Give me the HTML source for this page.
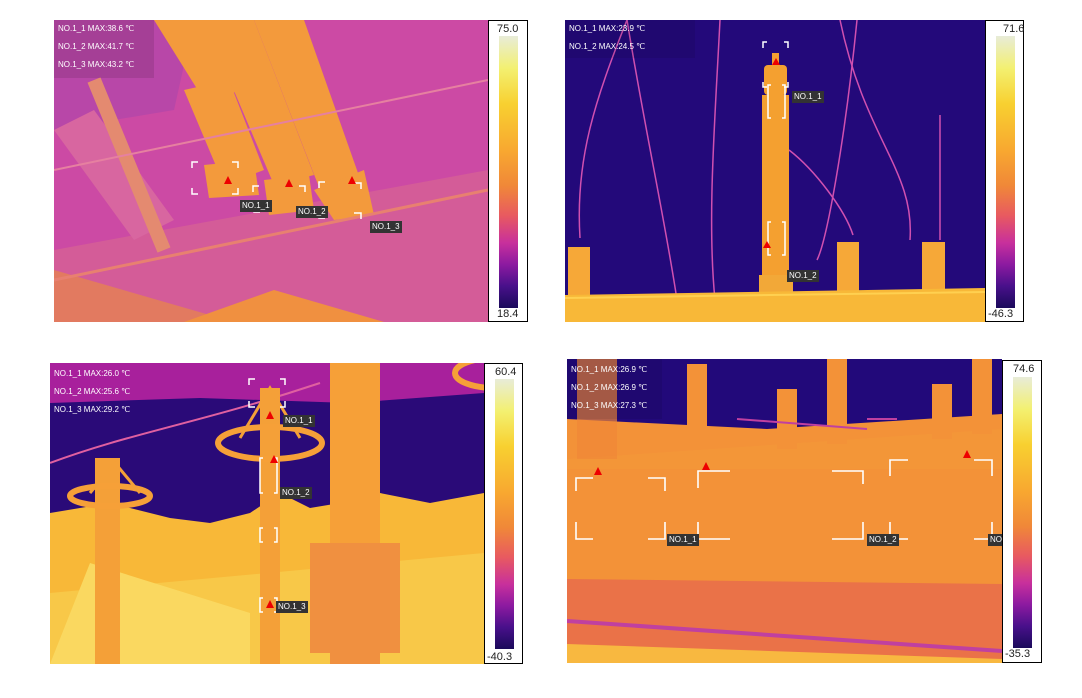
<!DOCTYPE html>
<html><head><meta charset="utf-8"><style>
body{margin:0;width:1082px;height:698px;background:#fff;position:relative;overflow:hidden;font-family:"Liberation Sans",sans-serif}
.p{position:absolute;overflow:hidden}
.cb{position:absolute;background:#fff;border:1px solid #000;box-sizing:border-box}
.g{position:absolute;background:linear-gradient(#e8ecd8 0%,#f3f070 12%,#f8d030 25%,#f8a830 42%,#f08838 55%,#e85a60 66%,#c8309c 76%,#8c1aa0 84%,#48108a 92%,#1a0a5a 100%)}
.v{position:absolute;font-size:11px;color:#222;left:8px}
.t{position:absolute;left:4px;color:#fff;font-size:8px;line-height:18px}
.l{position:absolute;background:#333;color:#fff;font-size:8px;padding:1px 2px;line-height:10px}
svg{position:absolute;left:0;top:0}
</style></head><body>

<!-- Panel 1 -->
<div class="p" style="left:54px;top:20px;width:434px;height:302px">
<svg width="434" height="302">
<rect width="434" height="302" fill="#cc4aa4"/>
<polygon points="0,230 434,150 434,302 0,302" fill="#d45c98"/>
<polygon points="0,250 180,302 0,302" fill="#e27a60"/>
<polygon points="130,302 220,270 330,302" fill="#f09040"/>
<polygon points="0,0 140,0 120,90 0,110" fill="#b847a8"/>
<polygon points="0,110 40,90 120,200 80,220" fill="#d866a0"/>
<polygon points="100,0 200,0 190,70 150,80" fill="#f39a3c"/>
<polygon points="130,70 175,60 210,150 170,165" fill="#f39a3c"/>
<polygon points="150,0 200,0 260,155 220,165" fill="#f39a3c"/>
<polygon points="200,0 250,0 310,170 270,180" fill="#f39a3c"/>
<polygon points="260,170 310,150 320,195 280,200" fill="#f39a3c"/>
<polygon points="150,145 200,140 205,175 155,178" fill="#f39a3c"/>
<polygon points="210,160 255,155 260,190 215,195" fill="#f39a3c"/>
<line x1="40" y1="60" x2="110" y2="230" stroke="#e48a70" stroke-width="14"/>
<line x1="0" y1="150" x2="434" y2="60" stroke="#e680a0" stroke-width="2"/>
<line x1="0" y1="260" x2="434" y2="170" stroke="#e88070" stroke-width="3"/>
<rect width="100" height="58" fill="#000" opacity=".1"/>
<g fill="none" stroke="#fff" stroke-width="1.5">
<path d="M138,148v-6h6M178,142h6v6M138,168v6h6M178,174h6v-6"/>
<path d="M199,172v-6h6M200,186v6h6M245,166h6v6M245,192h6v-6"/>
<path d="M265,168v-6h6M265,192v6h6M300,163h7v6M300,193h7v6"/>
</g>
<polygon points="170,164 174,156 178,164" fill="#e00"/>
<polygon points="231,167 235,159 239,167" fill="#e00"/>
<polygon points="294,164 298,156 302,164" fill="#e00"/>
</svg>
<div class="t" style="top:0">NO.1_1 MAX:38.6 ℃<br>NO.1_2 MAX:41.7 ℃<br>NO.1_3 MAX:43.2 ℃</div>
<div class="l" style="left:186px;top:180px">NO.1_1</div>
<div class="l" style="left:242px;top:186px">NO.1_2</div>
<div class="l" style="left:316px;top:201px">NO.1_3</div>
</div>
<div class="cb" style="left:488px;top:20px;width:40px;height:302px"><div class="v" style="top:2px">75.0</div><div class="g" style="left:10px;top:15px;width:19px;height:272px"></div><div class="v" style="top:287px">18.4</div></div>

<!-- Panel 2 -->
<div class="p" style="left:565px;top:20px;width:420px;height:302px">
<svg width="420" height="302">
<rect width="420" height="302" fill="#23097a"/>
<g fill="none" stroke="#d050b0" stroke-width="1.5">
<path d="M15,218C10,140 30,80 62,0"/><path d="M62,0C80,110 100,200 112,280"/>
<path d="M292,0C280,120 262,220 252,240"/><path d="M275,0C300,120 350,150 345,220"/>
<path d="M224,130C250,150 280,190 288,215"/>
<path d="M155,0C150,100 142,200 150,280"/>
<path d="M375,95V220"/>
</g>
<rect x="197" y="75" width="27" height="183" fill="#f4a030"/>
<rect x="199" y="45" width="23" height="30" rx="4" fill="#f4a030"/>
<rect x="207" y="33" width="7" height="13" fill="#f4a030"/>
<rect x="194" y="255" width="34" height="22" fill="#f2a838"/>
<rect x="3" y="227" width="22" height="60" fill="#f6a838"/>
<rect x="272" y="222" width="22" height="60" fill="#f6a838"/>
<rect x="357" y="222" width="23" height="60" fill="#f6a838"/>
<polygon points="0,275 420,268 420,302 0,302" fill="#f8b838"/>
<line x1="0" y1="278" x2="420" y2="272" stroke="#ffd050" stroke-width="2"/>
<rect width="130" height="38" fill="#000" opacity=".08"/>
<g fill="none" stroke="#fff" stroke-width="1.5">
<path d="M198,28v-6h4M219,22h4v6M198,62v5h4M219,67h4v-5"/>
<path d="M206,65h-3v33h3M217,65h3v33h-3"/>
<path d="M206,202h-3v33h3M217,202h3v33h-3"/>
</g>
<polygon points="207,45 211,38 215,45" fill="#e00"/>
<polygon points="198,228 202,221 206,228" fill="#e00"/>
</svg>
<div class="t" style="top:0">NO.1_1 MAX:23.9 ℃<br>NO.1_2 MAX:24.5 ℃</div>
<div class="l" style="left:227px;top:71px">NO.1_1</div>
<div class="l" style="left:222px;top:250px">NO.1_2</div>
</div>
<div class="cb" style="left:985px;top:20px;width:39px;height:302px"><div class="v" style="top:2px;left:17px">71.6</div><div class="g" style="left:10px;top:15px;width:19px;height:272px"></div><div class="v" style="top:287px;left:2px">-46.3</div></div>

<!-- Panel 3 -->
<div class="p" style="left:50px;top:363px;width:434px;height:301px">
<svg width="434" height="301">
<rect width="434" height="301" fill="#2a0a78"/>
<polygon points="0,0 434,0 434,30 300,40 150,35 0,40" fill="#a8209c"/>
<polygon points="0,150 60,140 120,155 160,160 200,150 230,130 260,145 290,140 330,130 380,140 434,130 434,301 0,301" fill="#f8b838"/>
<polygon points="0,230 434,190 434,301 0,301" fill="#f8c848"/>
<polygon points="40,200 200,250 200,301 0,301" fill="#fad860"/>
<path d="M0,100C80,70 150,60 270,20" stroke="#e060a0" stroke-width="2" fill="none"/>
<rect x="280" y="0" width="50" height="190" fill="#f6a038"/>
<rect x="260" y="180" width="90" height="110" fill="#f09040"/>
<rect x="280" y="290" width="50" height="11" fill="#f09040"/>
<rect x="210" y="25" width="20" height="276" fill="#f4a038"/>
<ellipse cx="220" cy="80" rx="52" ry="16" fill="none" stroke="#f6a038" stroke-width="6"/>
<rect x="45" y="95" width="25" height="206" fill="#f4a038"/>
<ellipse cx="60" cy="133" rx="40" ry="10" fill="none" stroke="#f6a038" stroke-width="6"/>
<path d="M40,130L65,100L90,130M190,75L220,25L250,75" stroke="#f4a038" stroke-width="3" fill="none"/>
<ellipse cx="445" cy="10" rx="40" ry="15" fill="none" stroke="#f6a038" stroke-width="6"/>
<g fill="none" stroke="#fff" stroke-width="1.5">
<path d="M199,22v-6h6M230,16h5v6M199,38v6h6M230,44h5v-6"/>
<path d="M213,95h-3v35h3M224,95h3v35h-3"/>
<path d="M213,165h-3v14h3M224,165h3v14h-3"/>
<path d="M213,235h-3v14h3M224,235h3v14h-3"/>
</g>
<polygon points="216,56 220,48 224,56" fill="#e00"/>
<polygon points="220,100 224,92 228,100" fill="#e00"/>
<polygon points="216,245 220,237 224,245" fill="#e00"/>
</svg>
<div class="t" style="top:2px">NO.1_1 MAX:26.0 ℃<br>NO.1_2 MAX:25.6 ℃<br>NO.1_3 MAX:29.2 ℃</div>
<div class="l" style="left:233px;top:52px">NO.1_1</div>
<div class="l" style="left:230px;top:124px">NO.1_2</div>
<div class="l" style="left:226px;top:238px">NO.1_3</div>
</div>
<div class="cb" style="left:484px;top:363px;width:39px;height:301px"><div class="v" style="top:2px;left:10px">60.4</div><div class="g" style="left:10px;top:15px;width:19px;height:270px"></div><div class="v" style="top:287px;left:2px">-40.3</div></div>

<!-- Panel 4 -->
<div class="p" style="left:567px;top:359px;width:435px;height:304px">
<svg width="435" height="304">
<rect width="435" height="304" fill="#22097a"/>
<polygon points="0,60 200,70 435,55 435,304 0,304" fill="#f39238"/>
<polygon points="0,100 435,70 435,110 0,110" fill="#f49a38" opacity=".6"/>
<polygon points="0,220 435,225 435,304 0,304" fill="#ea7248"/>
<line x1="0" y1="262" x2="435" y2="292" stroke="#c040a0" stroke-width="4"/>
<polygon points="0,285 435,300 435,304 0,304" fill="#f8b840"/>
<rect x="120" y="5" width="20" height="85" fill="#f39238"/>
<rect x="210" y="30" width="20" height="60" fill="#f39238"/>
<rect x="260" y="0" width="20" height="85" fill="#f39238"/>
<rect x="365" y="25" width="20" height="55" fill="#f39238"/>
<rect x="405" y="0" width="20" height="75" fill="#f39238"/>
<rect x="10" y="0" width="40" height="100" fill="#f08838" opacity=".7"/>
<path d="M170,60L300,70M300,60h30" stroke="#c040a0" stroke-width="2"/>
<rect width="95" height="60" fill="#000" opacity=".08"/>
<g fill="none" stroke="#fff" stroke-width="1.6">
<path d="M9,132v-13h17M81,119h17v13M9,163v17h17M81,180h17v-17"/>
<path d="M131,129v-17h32M131,163v17h32"/>
<path d="M265,112h31v13M265,180h31v-17"/>
<path d="M323,117v-16h18M323,163v17h18"/>
<path d="M407,101h18v16M407,180h18v-17"/>
</g>
<polygon points="27,116 31,108 35,116" fill="#e00"/>
<polygon points="135,111 139,103 143,111" fill="#e00"/>
<polygon points="396,99 400,91 404,99" fill="#e00"/>
</svg>
<div class="t" style="top:2px">NO.1_1 MAX:26.9 ℃<br>NO.1_2 MAX:26.9 ℃<br>NO.1_3 MAX:27.3 ℃</div>
<div class="l" style="left:100px;top:175px">NO.1_1</div>
<div class="l" style="left:300px;top:175px">NO.1_2</div>
<div class="l" style="left:421px;top:175px">NO.1_3</div>
</div>
<div class="cb" style="left:1002px;top:360px;width:40px;height:303px"><div class="v" style="top:2px;left:10px">74.6</div><div class="g" style="left:10px;top:16px;width:19px;height:271px"></div><div class="v" style="top:287px;left:2px">-35.3</div></div>

</body></html>
